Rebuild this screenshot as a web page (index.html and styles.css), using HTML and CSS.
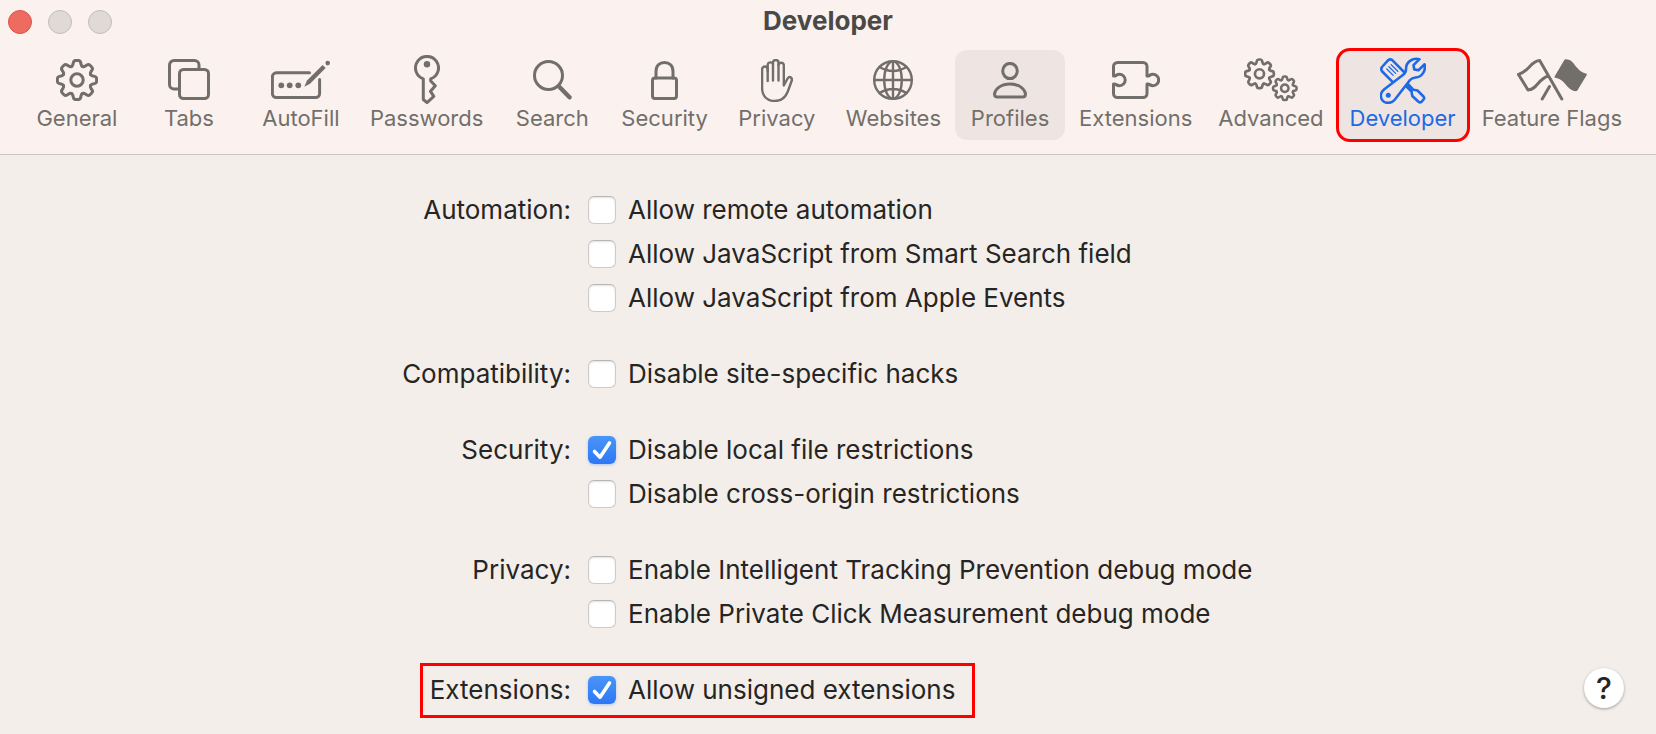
FILE: index.html
```html
<!DOCTYPE html>
<html lang="en">

<head>
  <meta charset="UTF-8">
  <title>Developer</title>
  <link rel="stylesheet" href="styles.css">
</head>

<body>

  <!-- gear outline, one tooth repeated 8 times -->
  <svg class="defs" width="0" height="0" aria-hidden="true">
    <defs>
      <path id="tooth" d="M-5.6-13.5Q-4.4-14-4-15.8L-3.6-17.6Q-3.2-19.6-1.2-19.6H1.2Q3.2-19.6 3.6-17.6L4-15.8Q4.4-14 5.6-13.5" />
      <g id="gear">
        <use href="#tooth" />
        <use href="#tooth" transform="rotate(45)" />
        <use href="#tooth" transform="rotate(90)" />
        <use href="#tooth" transform="rotate(135)" />
        <use href="#tooth" transform="rotate(180)" />
        <use href="#tooth" transform="rotate(225)" />
        <use href="#tooth" transform="rotate(270)" />
        <use href="#tooth" transform="rotate(315)" />
        <circle r="6.2" />
      </g>
    </defs>
  </svg>

  <header class="header">
    <div class="titlebar">
      <div class="lights">
        <button type="button" class="light close" aria-label="Close"></button>
        <button type="button" class="light" aria-label="Minimize" disabled></button>
        <button type="button" class="light" aria-label="Zoom" disabled></button>
      </div>
      <h1 class="title">Developer</h1>
    </div>

    <nav class="toolbar">
      <button type="button" class="tab">
        <span class="icon"><svg width="42" height="42" viewBox="-21 -21 42 42"><use href="#gear" /></svg></span>
        <span class="name">General</span>
      </button>

      <button type="button" class="tab">
        <span class="icon"><svg width="42" height="42" viewBox="0 0 42 42">
          <path d="M10 30H6a4.5 4.5 0 0 1-4.5-4.5V6A4.5 4.5 0 0 1 6 1.5H26.5A4.5 4.5 0 0 1 31 6v4" />
          <rect x="11.5" y="10.5" width="29" height="29" rx="4" />
        </svg></span>
        <span class="name">Tabs</span>
      </button>

      <button type="button" class="tab">
        <span class="icon"><svg width="60" height="40" viewBox="0 0 60 40">
          <path d="M38.5 12.8H5.4a4 4 0 0 0-4 4V33.5a4 4 0 0 0 4 4H44.6a4 4 0 0 0 4-4V19.5" />
          <circle class="solid" cx="10.3" cy="25.3" r="2.9" />
          <circle class="solid" cx="18.7" cy="25.3" r="2.9" />
          <circle class="solid" cx="27.3" cy="25.3" r="2.9" />
          <path class="solid" d="M33.3 26.8L36 20.5 51.6 4.9 54.7 8 39 23.7Z" />
          <circle class="solid" cx="56.7" cy="3.1" r="2.3" />
        </svg></span>
        <span class="name">AutoFill</span>
      </button>

      <button type="button" class="tab">
        <span class="icon"><svg width="26" height="50" viewBox="0 0 26 50">
          <path d="M9.3 23.8A11.5 11.5 0 1 1 16.7 23.8V26L21.3 30.7 16.5 36.3 19.8 41.3 13 47.6 9.3 44.5Z" />
          <circle class="solid" cx="13" cy="9.3" r="3.2" />
        </svg></span>
        <span class="name">Passwords</span>
      </button>

      <button type="button" class="tab">
        <span class="icon"><svg width="39" height="40" viewBox="0 0 39 40">
          <circle cx="15.5" cy="15.5" r="14" />
          <path class="thick" d="M26.5 27L36.5 37.3" />
        </svg></span>
        <span class="name">Search</span>
      </button>

      <button type="button" class="tab">
        <span class="icon"><svg width="27" height="39" viewBox="0 0 27 39">
          <rect x="1.5" y="17" width="24" height="20.5" rx="2.5" />
          <path d="M5 17V10.5C5 4.5 8.5 1.5 13.500 1.500S22 4.500 22 10.500V17" />
        </svg></span>
        <span class="name">Security</span>
      </button>

      <button type="button" class="tab">
        <span class="icon"><svg class="thin" width="32" height="43" viewBox="0 0 32 43">
          <path d="M6.7 22V10.3a2.8 2.8 0 0 0-5.6 0V29C1.1 37 6 42 13.5 42 21 42 24.5 38.5 26.8 32.5L30.6 22C31.8 18.5 28.2 16.6 26.6 19.5L22.8 26.5V6a2.7 2.7 0 0 0-5.3 0" />
          <path d="M6.7 12V6A2.65 2.65 0 0 1 12 6V21.5M12 6V3.8a2.7 2.7 0 0 1 5.5 0V21.5" />
        </svg></span>
        <span class="name">Privacy</span>
      </button>

      <button type="button" class="tab">
        <span class="icon"><svg class="thin" width="40" height="40" viewBox="-20 -20 40 40">
          <circle r="18.8" />
          <ellipse rx="8.8" ry="18.8" />
          <path d="M0-18.8V18.8M-18.8 0H18.8M-13.5-13Q0-5 13.5-13M-13.5 13Q0 5 13.5 13" />
        </svg></span>
        <span class="name">Websites</span>
      </button>

      <button type="button" class="tab hover">
        <span class="icon"><svg width="34" height="37" viewBox="0 0 34 37">
          <ellipse cx="17" cy="9" rx="7.3" ry="7.6" />
          <path d="M4.500 35C2 35 1.500 34 1.500 32 2 27 8 22 17 22S32 27 32.500 32C32.500 34 32 35 29.500 35Z" />
        </svg></span>
        <span class="name">Profiles</span>
      </button>

      <button type="button" class="tab">
        <span class="icon"><svg width="48" height="38" viewBox="0 0 48 38">
          <path d="M1.5 15V5.5a4 4 0 0 1 4-4H31a4 4 0 0 1 4 4V15H36C37.5 15 38 13.3 41 13.3a5.700 5.700 0 0 1 0 11.400C38 24.700 37.500 23 36 23H35V32.500a4 4 0 0 1-4 4H5.500a4 4 0 0 1-4-4V23H2.500C4 23 4.500 24.700 7.500 24.700a5.700 5.700 0 0 0 0-11.400C4.500 13.300 4 15 2.500 15Z" />
        </svg></span>
        <span class="name">Extensions</span>
      </button>

      <button type="button" class="tab">
        <span class="icon"><svg class="gears" width="54" height="44" viewBox="0 0 54 44">
          <use href="#gear" transform="translate(15.500 15.800) scale(.73)" />
          <g class="small"><use href="#gear" transform="translate(40.800 30.300) scale(.6)" /></g>
        </svg></span>
        <span class="name">Advanced</span>
      </button>

      <button type="button" class="tab active">
        <span class="icon"><svg class="tools" width="46" height="47" viewBox="0 0 46 47">
          <path d="M12.8 25.2L2.2 14.5C1 13 1 11.5 2 10L8 3.3C9.5 2 11 2 12.5 3.3L26 17M22 25L31.5 34.5 32.3 39 38.5 44.8C39.5 45.6 40.5 45.6 41.5 44.8L43.5 42.5C44.5 41.5 44.3 40.5 43.5 39.5L37.5 33.5 33.5 32.8 26 25" />
          <path class="fine" d="M6.8 12L13.2 18.4M8.9 9.7L15.6 16.4M11.2 7.7L17.8 14.3" />
          <path class="wrench" d="M39.5 2.2L33.5 8.2 34.3 12.4 38.5 13.2 44.6 7.3C46 13 42.5 20 35.5 20.5 33 20.7 31.5 21.3 30 23L14.5 43C11 47 5 46.5 2.5 43.5 0 40 .5 35.5 4 32.5L23.5 17.5C25.5 16 26 14.5 26 12 26 4.5 33 .3 39.5 2.2Z" />
          <circle class="solid" cx="8.3" cy="38.3" r="2.5" />
        </svg></span>
        <span class="name">Developer</span>
      </button>

      <button type="button" class="tab">
        <span class="icon"><svg width="70" height="42" viewBox="0 0 70 42">
          <path d="M44.800 40L22.700 1.500C14 1.500 12 12.500 1.500 15.500L11 31C20 31 21 19.500 31.500 17" />
          <path d="M32.500 27.500L25.200 40" />
          <path class="solid" d="M48.7.3C58 .3 58 12 69 14.5 70 14.8 70 15.5 69.6 16.2L60.5 31.3C60 32 59.5 32.2 58.5 32.2 50 31.5 48 20 38.5 18.8 37.5 18.6 37.3 18 37.7 17.2L47.2 1.2C47.6.5 48 .3 48.7.3Z" />
        </svg></span>
        <span class="name">Feature Flags</span>
      </button>
    </nav>
  </header>

  <main class="settings">
    <div class="group" role="group" aria-labelledby="automation">
      <span class="caption" id="automation">Automation:</span>
      <div class="options">
        <label class="option"><input type="checkbox"> Allow remote automation</label>
        <label class="option"><input type="checkbox"> Allow JavaScript from Smart Search field</label>
        <label class="option"><input type="checkbox"> Allow JavaScript from Apple Events</label>
      </div>
    </div>

    <div class="group" role="group" aria-labelledby="compatibility">
      <span class="caption" id="compatibility">Compatibility:</span>
      <div class="options">
        <label class="option"><input type="checkbox"> Disable site-specific hacks</label>
      </div>
    </div>

    <div class="group" role="group" aria-labelledby="security">
      <span class="caption" id="security">Security:</span>
      <div class="options">
        <label class="option"><input type="checkbox" checked> Disable local file restrictions</label>
        <label class="option"><input type="checkbox"> Disable cross-origin restrictions</label>
      </div>
    </div>

    <div class="group" role="group" aria-labelledby="privacy">
      <span class="caption" id="privacy">Privacy:</span>
      <div class="options">
        <label class="option"><input type="checkbox"> Enable Intelligent Tracking Prevention debug mode</label>
        <label class="option"><input type="checkbox"> Enable Private Click Measurement debug mode</label>
      </div>
    </div>

    <div class="group" role="group" aria-labelledby="extensions">
      <span class="caption" id="extensions">Extensions:</span>
      <div class="options last">
        <label class="option marked"><input type="checkbox" checked> Allow unsigned extensions</label>
        <button type="button" class="help" aria-label="Help">?</button>
      </div>
    </div>
  </main>

</body>

</html>
```

FILE: styles.css
```css
* {
  box-sizing: border-box;
}

body {
  margin: 0;
  min-height: 100vh;
  background: #f3eeea;
  color: #262524;
  font-family: Inter, "Liberation Sans", sans-serif;
  font-size: 26px;
}

button {
  font: inherit;
  color: inherit;
  border: none;
  padding: 0;
  background: none;
}

.defs {
  position: absolute;
}

/* Header */
.header {
  background: #fbf2ef;
  border-bottom: 1px solid #cbc5c2;
  padding-bottom: 14px;
}

.titlebar {
  display: grid;
  grid-template-columns: 1fr auto 1fr;
  align-items: center;
  height: 44px;
  padding: 0 8px;
}

.lights {
  display: flex;
  gap: 16px;
}

.light {
  width: 24px;
  height: 24px;
  border-radius: 50%;
  border: 1px solid #c3bebb;
  background: #dfdad6;
}

.light.close {
  border-color: #d9534a;
  background: #ed6b5f;
}

.title {
  margin: 0;
  padding-bottom: 2px;
  font-size: 26px;
  font-weight: 700;
  line-height: 40px;
  color: #4b4946;
}

.toolbar {
  display: flex;
  justify-content: center;
  gap: 2px;
  padding-top: 6px;
}

.tab {
  min-width: 110px;
  padding: 7px 12px 9px;
  border-radius: 12px;
  color: #726f6b;
  font-size: 22px;
  line-height: 26px;
  white-space: nowrap;
}

.tab.hover,
.tab.active {
  background: #eee5e2;
}

.tab.active {
  color: #2069e6;
  outline: 3px solid #ff0000;
  outline-offset: -1px;
}

.icon {
  display: flex;
  align-items: center;
  justify-content: center;
  height: 46px;
  margin-bottom: 2px;
}

.icon svg {
  flex: none;
  fill: none;
  stroke: currentColor;
  stroke-width: 3;
  stroke-linecap: round;
  stroke-linejoin: round;
}

.icon .thin {
  stroke-width: 2.4;
}

.icon .tools {
  stroke-width: 2.6;
}

.icon .gears {
  stroke-width: 3.7;
}

.icon .small {
  stroke-width: 4.2;
}

.icon .thick {
  stroke-width: 4.4;
}

.icon .fine {
  stroke-width: 1.3;
}

.icon .solid {
  fill: currentColor;
  stroke: none;
}

.icon .wrench {
  fill: #eee5e2;
}

/* Settings */
.settings {
  display: flex;
  flex-direction: column;
  gap: 32px;
  padding-top: 33px;
}

.group {
  display: grid;
  grid-template-columns: 571fr 1068fr;
  column-gap: 17px;
  line-height: 44px;
}

.caption {
  text-align: right;
}

.options {
  display: flex;
  flex-direction: column;
  align-items: flex-start;
}

.options.last {
  flex-direction: row;
  justify-content: space-between;
  padding-right: 32px;
}

.option {
  display: flex;
  align-items: center;
  gap: 12px;
  white-space: nowrap;
}

.option input {
  appearance: none;
  width: 28px;
  height: 28px;
  margin: 0;
  border: 1px solid #d0cbc8;
  border-top-color: #b9b5b2;
  border-radius: 6px;
  background: #fff;
  box-shadow: inset 0 1px 2px rgba(0, 0, 0, 0.12);
}

.option input:checked {
  border: none;
  background: url("data:image/svg+xml,%3Csvg xmlns='http://www.w3.org/2000/svg' viewBox='0 0 28 28'%3E%3Cpath d='M6.5 15.5L12 21.2 21.5 7' fill='none' stroke='white' stroke-width='3.6' stroke-linecap='round' stroke-linejoin='round'/%3E%3C/svg%3E"), linear-gradient(#4a95f8, #2c78f5);
  box-shadow: 0 1px 3px rgba(44, 120, 245, 0.35);
}

/* red frame around the whole Extensions row */
.marked {
  position: relative;
}

.marked::before {
  content: "";
  position: absolute;
  top: -5px;
  bottom: -6px;
  left: -168px;
  right: -20px;
  border: 3px solid #ff0000;
  pointer-events: none;
}

.help {
  width: 40px;
  height: 40px;
  border-radius: 50%;
  background: #fff;
  box-shadow: 0 1px 3px rgba(0, 0, 0, 0.35);
  font-size: 30px;
  font-weight: 500;
  line-height: 40px;
}
```
